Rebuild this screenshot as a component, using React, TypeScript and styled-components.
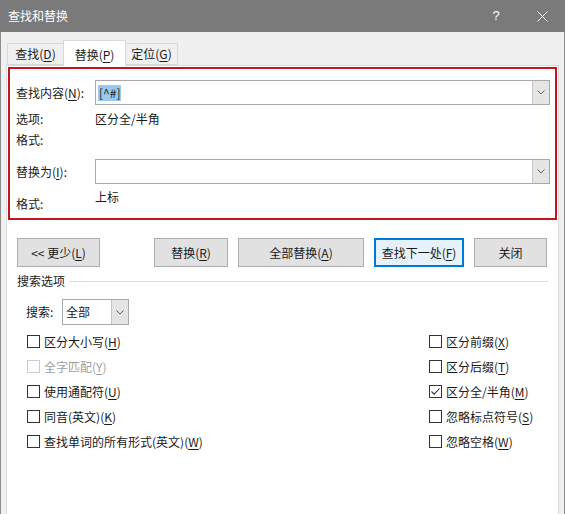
import styled, { createGlobalStyle } from "styled-components";

const GlobalStyle = createGlobalStyle`
  html, body {
    margin: 0;
    padding: 0;
    background: #ffffff;
  }
  body {
    font-family: "Noto Sans CJK SC", "Microsoft YaHei", sans-serif;
    font-size: 12px;
    color: #1a1a1a;
  }
  * {
    box-sizing: border-box;
  }
  u {
    text-underline-offset: 2px;
  }
`;

const Window = styled.div`
  width: 565px;
  height: 514px;
  display: flex;
  flex-direction: column;
  overflow: hidden;
`;

const TitleBar = styled.div`
  height: 32px;
  flex: none;
  display: flex;
  align-items: center;
  padding-left: 8px;
  background: #7a7a7a;
  color: #ffffff;
  line-height: 16px;
`;

const TitleControls = styled.div`
  margin-left: auto;
  display: flex;
  height: 100%;
`;

const TitleButton = styled.div`
  width: 46px;
  height: 100%;
  display: flex;
  align-items: center;
  justify-content: center;
  color: #ffffff;
  font-family: "Liberation Sans", sans-serif;
  font-size: 13px;
`;

const Body = styled.div`
  flex: 1;
  display: flex;
  flex-direction: column;
  padding: 8px 5px 0;
  background: #f0f0f0;
  border-left: 1px solid #8c8c8c;
  border-right: 1px solid #8c8c8c;
`;

const TabStrip = styled.div`
  height: 26px;
  display: flex;
  align-items: flex-end;
  padding-left: 1px;
  margin-bottom: -1px;
  position: relative;
  z-index: 1;
`;

const Tab = styled.div<{ $active?: boolean; $w: number }>`
  width: ${(p) => p.$w}px;
  height: ${(p) => (p.$active ? 26 : 22)}px;
  margin-bottom: ${(p) => (p.$active ? 0 : 1)}px;
  display: flex;
  align-items: center;
  justify-content: center;
  padding-top: ${(p) => (p.$active ? 2 : 0)}px;
  background: ${(p) => (p.$active ? "#ffffff" : "#f0f0f0")};
  border: 1px solid #d9d9d9;
  border-bottom: ${(p) => (p.$active ? "none" : "1px solid #d9d9d9")};
  margin-left: ${(p) => (p.$active ? -1 : 0)}px;
  margin-right: ${(p) => (p.$active ? -1 : 0)}px;
  position: relative;
  z-index: ${(p) => (p.$active ? 2 : 1)};
  line-height: 16px;
`;

const Panel = styled.div`
  flex: 1;
  background: #ffffff;
  border: 1px solid #d9d9d9;
  border-bottom: none;
  padding: 1px 1px 0;
  display: flex;
  flex-direction: column;
`;

const Highlight = styled.div`
  border: 2px solid #c2161d;
  padding: 11px 5px 6px 6px;
  display: flex;
  flex-direction: column;
`;

const FieldRow = styled.div<{ $mt?: number }>`
  height: 25px;
  margin-top: ${(p) => p.$mt ?? 0}px;
  display: flex;
  align-items: center;
`;

const Label = styled.div`
  width: 79px;
  flex: none;
  line-height: 16px;
`;

const Value = styled.div`
  line-height: 16px;
`;

const InfoRow = styled.div<{ $mt: number }>`
  height: 16px;
  margin-top: ${(p) => p.$mt}px;
  display: flex;
  align-items: center;
`;

const FormatRow = styled.div`
  height: 23px;
  margin-top: 5px;
  display: flex;
  & > ${Label} {
    align-self: flex-end;
  }
  & > ${Value} {
    align-self: flex-start;
  }
`;

const Combo = styled.div<{ $w?: number }>`
  ${(p) => (p.$w ? `width: ${p.$w}px;` : "flex: 1;")}
  height: ${(p) => (p.$w ? 26 : 25)}px;
  display: flex;
  align-items: stretch;
  background: #ffffff;
  border: 1px solid #a9a9a9;
`;

const ComboText = styled.div<{ $pad?: number }>`
  flex: 1;
  display: flex;
  align-items: center;
  padding-left: ${(p) => p.$pad ?? 2}px;
  line-height: 16px;
`;

const Selected = styled.span`
  background: #99c9ef;
  padding: 0 1px;
`;

const DropButton = styled.div`
  width: 17px;
  flex: none;
  display: flex;
  align-items: center;
  justify-content: center;
  background: #e5e5e5;
  border-left: 1px solid #c4c4c4;
`;

const ButtonRow = styled.div`
  margin-top: 18px;
  padding-left: 9px;
  display: flex;
  gap: 10px;
`;

const Button = styled.div<{ $w: number; $default?: boolean; $gapAfter?: number }>`
  width: ${(p) => p.$w}px;
  height: 29px;
  margin-right: ${(p) => p.$gapAfter ?? 0}px;
  display: flex;
  align-items: center;
  justify-content: center;
  background: ${(p) => (p.$default ? "#e5f1fb" : "#e1e1e1")};
  border: ${(p) => (p.$default ? "2px solid #0078d7" : "1px solid #adadad")};
  line-height: 16px;
`;

const SectionHeader = styled.div`
  margin-top: 6px;
  height: 16px;
  padding: 0 9px;
  display: flex;
  align-items: center;
  line-height: 16px;
`;

const SectionLine = styled.div`
  flex: 1;
  height: 1px;
  margin-left: 4px;
  background: #dcdcdc;
`;

const SearchRow = styled.div`
  margin-top: 10px;
  padding-left: 18px;
  display: flex;
  align-items: center;
`;

const SearchLabel = styled.div`
  width: 36px;
  line-height: 16px;
`;

const Options = styled.div`
  margin-top: 4px;
  padding-left: 19px;
  display: flex;
`;

const OptionColumn = styled.div<{ $w?: number }>`
  ${(p) => (p.$w ? `width: ${p.$w}px;` : "flex: 1;")}
  display: flex;
  flex-direction: column;
`;

const CheckRow = styled.div<{ $disabled?: boolean }>`
  height: 25px;
  display: flex;
  align-items: center;
  color: ${(p) => (p.$disabled ? "#a0a0a0" : "#1a1a1a")};
  line-height: 16px;
`;

const Box = styled.span<{ $disabled?: boolean }>`
  width: 13px;
  height: 13px;
  flex: none;
  margin-right: 4px;
  display: flex;
  align-items: center;
  justify-content: center;
  border: 1px solid ${(p) => (p.$disabled ? "#cccccc" : "#333333")};
  background: #ffffff;
`;

const Chevron = () => (
  <svg width="8" height="5" viewBox="0 0 8 5">
    <path d="M0.5 0.5 L4 4 L7.5 0.5" fill="none" stroke="#606060" strokeWidth="1" />
  </svg>
);

const CloseIcon = () => (
  <svg width="11" height="11" viewBox="0 0 11 11">
    <path d="M0.5 0.5 L10.5 10.5 M10.5 0.5 L0.5 10.5" stroke="#ffffff" strokeWidth="1" />
  </svg>
);

const CheckMark = () => (
  <svg width="11" height="11" viewBox="0 0 11 11">
    <path d="M1.5 5.5 L4.2 8.2 L9.5 2.5" fill="none" stroke="#333333" strokeWidth="1.1" />
  </svg>
);

type Option = { text: string; key: string; checked?: boolean; disabled?: boolean };

const leftOptions: Option[] = [
  { text: "区分大小写", key: "H" },
  { text: "全字匹配", key: "Y", disabled: true },
  { text: "使用通配符", key: "U" },
  { text: "同音(英文)", key: "K" },
  { text: "查找单词的所有形式(英文)", key: "W" },
];

const rightOptions: Option[] = [
  { text: "区分前缀", key: "X" },
  { text: "区分后缀", key: "T" },
  { text: "区分全/半角", key: "M", checked: true },
  { text: "忽略标点符号", key: "S" },
  { text: "忽略空格", key: "W" },
];

function CheckOption({ option }: { option: Option }) {
  return (
    <CheckRow $disabled={option.disabled}>
      <Box $disabled={option.disabled}>{option.checked && <CheckMark />}</Box>
      {option.text}(<u>{option.key}</u>)
    </CheckRow>
  );
}

export default function App() {
  return (
    <>
      <GlobalStyle />
      <Window>
        <TitleBar>
          查找和替换
          <TitleControls>
            <TitleButton>?</TitleButton>
            <TitleButton>
              <CloseIcon />
            </TitleButton>
          </TitleControls>
        </TitleBar>
        <Body>
          <TabStrip>
            <Tab $w={57}>
              查找(<u>D</u>)
            </Tab>
            <Tab $w={63} $active>
              替换(<u>P</u>)
            </Tab>
            <Tab $w={53}>
              定位(<u>G</u>)
            </Tab>
          </TabStrip>
          <Panel>
            <Highlight>
              <FieldRow>
                <Label>
                  查找内容(<u>N</u>):
                </Label>
                <Combo>
                  <ComboText>
                    <Selected>[^#]</Selected>
                  </ComboText>
                  <DropButton>
                    <Chevron />
                  </DropButton>
                </Combo>
              </FieldRow>
              <InfoRow $mt={6}>
                <Label>选项:</Label>
                <Value>区分全/半角</Value>
              </InfoRow>
              <InfoRow $mt={5}>
                <Label>格式:</Label>
              </InfoRow>
              <FieldRow $mt={11}>
                <Label>
                  替换为(<u>I</u>):
                </Label>
                <Combo>
                  <ComboText />
                  <DropButton>
                    <Chevron />
                  </DropButton>
                </Combo>
              </FieldRow>
              <FormatRow>
                <Label>格式:</Label>
                <Value>上标</Value>
              </FormatRow>
            </Highlight>

            <ButtonRow>
              <Button $w={83} $gapAfter={44}>
                &lt;&lt; 更少(<u>L</u>)
              </Button>
              <Button $w={74}>
                替换(<u>R</u>)
              </Button>
              <Button $w={126}>
                全部替换(<u>A</u>)
              </Button>
              <Button $w={90} $default>
                查找下一处(<u>F</u>)
              </Button>
              <Button $w={73}>关闭</Button>
            </ButtonRow>

            <SectionHeader>
              搜索选项
              <SectionLine />
            </SectionHeader>

            <SearchRow>
              <SearchLabel>搜索:</SearchLabel>
              <Combo $w={67}>
                <ComboText $pad={3}>全部</ComboText>
                <DropButton>
                  <Chevron />
                </DropButton>
              </Combo>
            </SearchRow>

            <Options>
              <OptionColumn $w={402}>
                {leftOptions.map((o) => (
                  <CheckOption key={o.text} option={o} />
                ))}
              </OptionColumn>
              <OptionColumn>
                {rightOptions.map((o) => (
                  <CheckOption key={o.text} option={o} />
                ))}
              </OptionColumn>
            </Options>
          </Panel>
        </Body>
      </Window>
    </>
  );
}
